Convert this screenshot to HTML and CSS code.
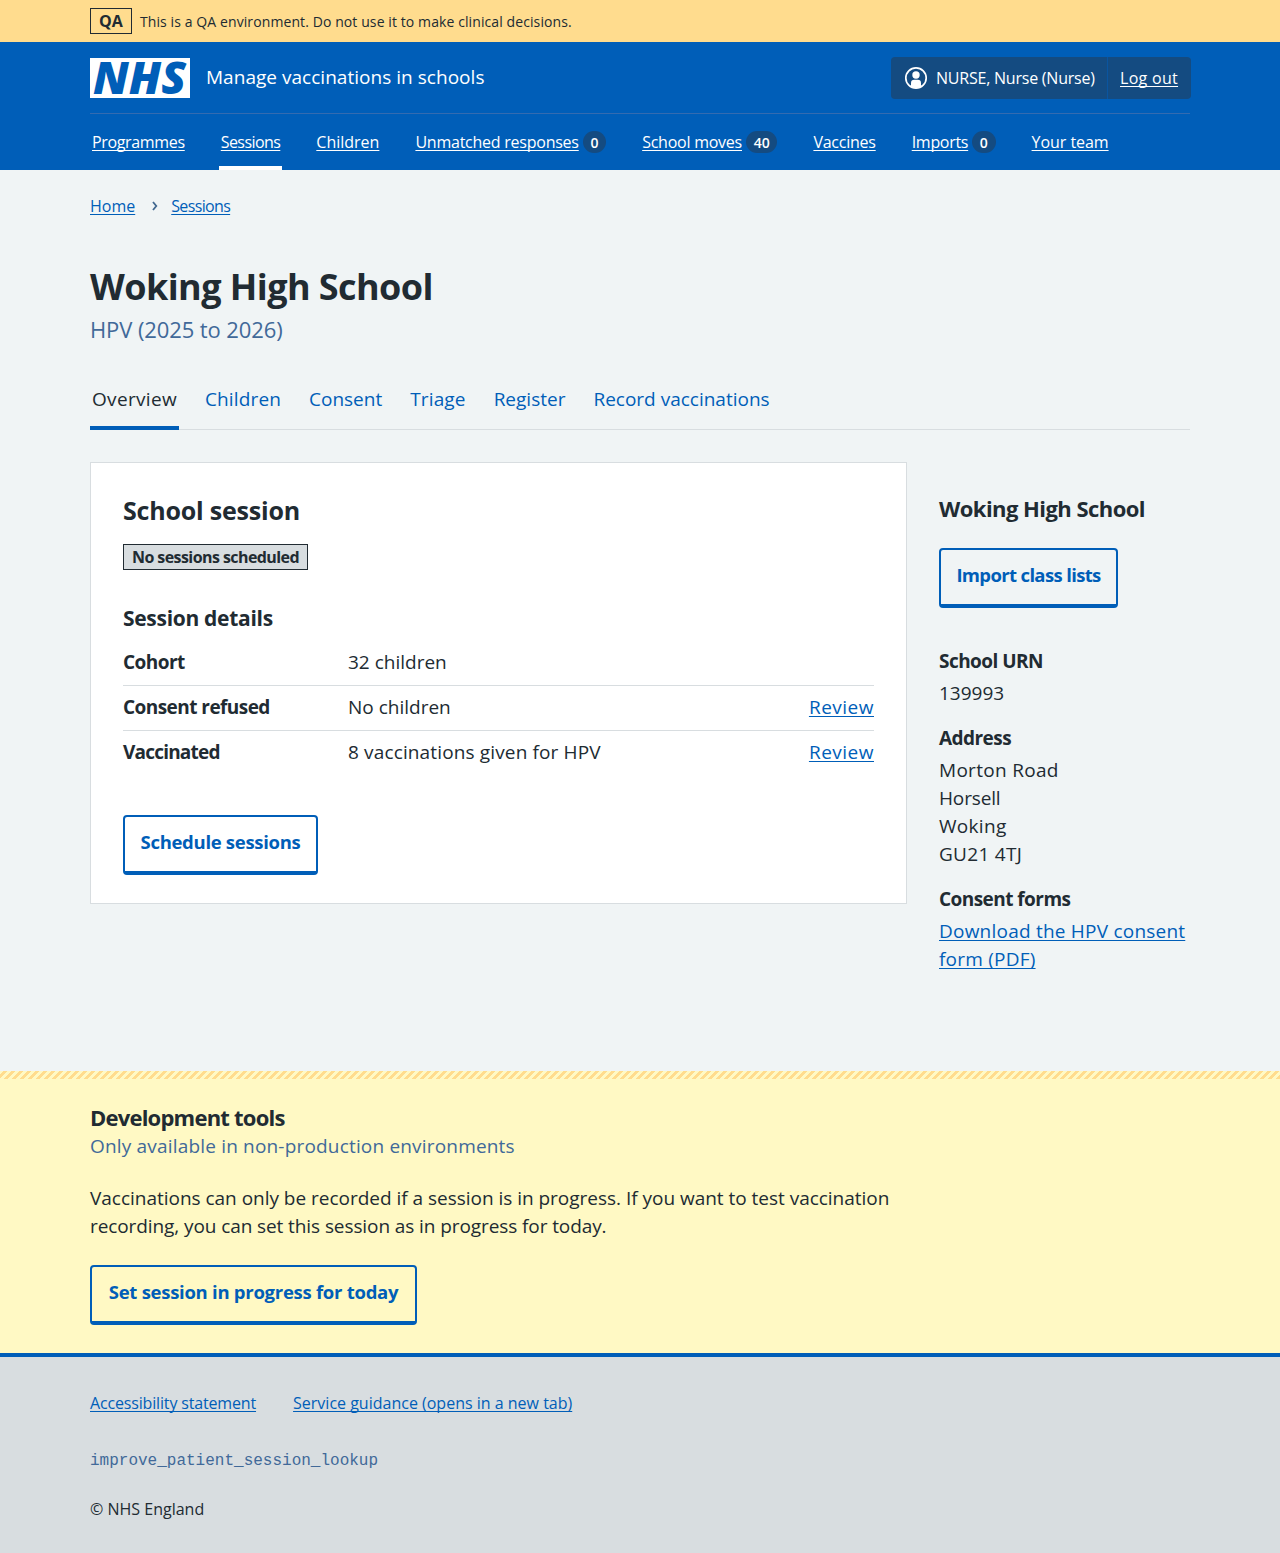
FILE: index.html
```html
<!DOCTYPE html>
<html lang="en">
<head>
<meta charset="utf-8">
<title>Woking High School – Manage vaccinations in schools</title>
<link rel="stylesheet" href="styles.css">
</head>
<body>
<div class="environment">
  <div class="container environment-row">
    <strong class="environment-tag">QA</strong>
    <span class="environment-text">This is a QA environment. Do not use it to make clinical decisions.</span>
  </div>
</div>
<header class="header">
  <div class="container">
    <div class="header-top">
      <svg class="logo" viewBox="0 0 100 40" width="100" height="40" role="img" aria-label="NHS">
        <rect width="100" height="40" fill="#fff"/>
        <text class="logo-text" x="3" y="36.4" textLength="93" lengthAdjust="spacingAndGlyphs">NHS</text>
      </svg>
      <span class="service">Manage vaccinations in schools</span>
      <div class="account">
        <span class="account-user">
          <svg class="account-icon" viewBox="0 0 24 24" width="24" height="24" aria-hidden="true">
            <circle cx="12" cy="12" r="10.2" fill="none" stroke="#fff" stroke-width="1.7"/>
            <circle cx="12" cy="9" r="3.7" fill="#fff"/>
            <path d="M7 20.500v-3.400a3.300 3.300 0 0 1 3.300-3.300h3.400a3.300 3.300 0 0 1 3.300 3.300v3.400q-5 3-10 0z" fill="#fff"/>
          </svg>
          <span class="account-name">NURSE, Nurse (Nurse)</span>
        </span>
        <a class="account-logout" href="#">Log out</a>
      </div>
    </div>
    <nav class="nav">
      <div class="nav-item nav-programmes"><a href="#">Programmes</a></div>
      <div class="nav-item nav-current"><a href="#">Sessions</a></div>
      <div class="nav-item nav-children"><a href="#">Children</a></div>
      <div class="nav-item"><a href="#">Unmatched responses</a><span class="count">0</span></div>
      <div class="nav-item"><a href="#">School moves</a><span class="count">40</span></div>
      <div class="nav-item"><a href="#">Vaccines</a></div>
      <div class="nav-item nav-imports"><a href="#">Imports</a><span class="count">0</span></div>
      <div class="nav-item nav-team"><a href="#">Your team</a></div>
    </nav>
  </div>
</header>
<div class="container page">
  <nav class="breadcrumb">
    <a href="#">Home</a>
    <svg class="chevron" viewBox="0 0 8 12" width="8" height="12" aria-hidden="true"><path d="M2 2l3.300 4L2 10" fill="none" stroke="#41678f" stroke-width="1.800"/></svg>
    <a class="crumb-sessions" href="#">Sessions</a>
  </nav>
  <main>
    <h1 class="title">Woking High School</h1>
    <p class="caption">HPV (2025 to 2026)</p>
    <nav class="tabs">
      <a class="tab tab-current" href="#">Overview</a>
      <a class="tab tab-wide" href="#">Children</a>
      <a class="tab" href="#">Consent</a>
      <a class="tab tab-wide" href="#">Triage</a>
      <a class="tab" href="#">Register</a>
      <a class="tab" href="#">Record vaccinations</a>
    </nav>
    <div class="columns">
      <section class="card">
        <h2 class="card-title">School session</h2>
        <strong class="status">No sessions scheduled</strong>
        <h3 class="card-subtitle">Session details</h3>
        <dl class="summary">
          <div class="summary-row"><dt>Cohort</dt><dd>32 children</dd></div>
          <div class="summary-row"><dt>Consent refused</dt><dd>No children</dd><dd class="action"><a href="#">Review</a></dd></div>
          <div class="summary-row"><dt class="tight">Vaccinated</dt><dd class="given">8 vaccinations given for HPV</dd><dd class="action"><a href="#">Review</a></dd></div>
        </dl>
        <button class="button">Schedule sessions</button>
      </section>
      <aside class="side">
        <h3 class="side-title">Woking High School</h3>
        <button class="button button-import">Import class lists</button>
        <dl class="details">
          <dt>School URN</dt><dd>139993</dd>
          <dt>Address</dt><dd class="address">Morton Road<br><span class="town">Horsell</span><br>Woking<br>GU21 4TJ</dd>
          <dt>Consent forms</dt><dd><a class="download" href="#">Download the HPV consent<br>form (PDF)</a></dd>
        </dl>
      </aside>
    </div>
  </main>
</div>
<section class="dev">
  <div class="container">
    <h2 class="dev-title">Development tools</h2>
    <p class="dev-caption">Only available in non-production environments</p>
    <p class="dev-text">Vaccinations can only be recorded if a session is in progress. If you want to test vaccination<br><span class="dev-line">recording, you can set this session as in progress for today.</span></p>
    <button class="button button-dev">Set session in progress for today</button>
  </div>
</section>
<footer class="footer">
  <div class="container">
    <div class="footer-links">
      <a class="accessibility" href="#">Accessibility statement</a>
      <a href="#">Service guidance (opens in a new tab)</a>
    </div>
    <p class="branch">improve_patient_session_lookup</p>
    <p class="copyright">© NHS England</p>
  </div>
</footer>
</body>
</html>
```
FILE: styles.css
```css
* { box-sizing: border-box; }
body {
  margin: 0;
  background: #f0f4f5;
  color: #212b32;
  font: 19px/28px "Open Sans", "Noto Sans", sans-serif;
}
h1, h2, h3, p, dl, dd { margin: 0; }
a { color: #005eb8; text-decoration-thickness: 1px; text-underline-offset: 2px; text-decoration-skip-ink: none; }
.container { width: 1100px; margin: 0 auto; white-space: nowrap; }

.environment { height: 42px; background: #ffdc8e; }
.environment-row { display: flex; gap: 8px; padding-top: 8px; }
.environment-tag { width: 42px; height: 26px; border: 1px solid #212b32; text-align: center; font-size: 16px; line-height: 24px; }
.environment-text { font-size: 14px; line-height: 27px; letter-spacing: 0.095px; }

.header { height: 128px; background: #005eb8; color: #fff; }
.header a { color: #fff; }
.header-top { display: flex; align-items: flex-start; height: 72px; padding-top: 15px; border-bottom: 1px solid #346bb0; }
.logo { margin: 1px 16px 0 0; overflow: visible; }
.logo-text { font: italic 800 45px "Open Sans", sans-serif; fill: #005eb8; }
.service { line-height: 40px; letter-spacing: 0.03px; }
.account { display: flex; margin: 0 -1px 0 auto; height: 42px; border-radius: 4px; background: #144b81; font-size: 16px; line-height: 42px; }
.account-user { display: flex; align-items: center; width: 217px; padding-left: 13px; gap: 8px; border-right: 1px solid #0a55a0; letter-spacing: -0.22px; }
.account-logout { width: 83px; padding-left: 12px; letter-spacing: 0.3px; }
.nav { display: flex; height: 56px; gap: 32px; font-size: 16px; line-height: 56px; letter-spacing: -0.24px; }
.nav-item { display: flex; align-items: center; padding: 0 2px; }
.nav-programmes { letter-spacing: -0.34px; }
.nav-current { border-bottom: 4px solid #fff; letter-spacing: -0.57px; }
.nav-current a { height: 56px; margin-bottom: -4px; }
.nav-children { letter-spacing: 0; }
.nav-imports { letter-spacing: -0.3px; }
.nav-team { letter-spacing: -0.05px; }
.count { height: 22px; margin-left: 4px; padding: 0 7.700px; border-radius: 11px; background: #144b81; font-size: 14px; font-weight: 600; line-height: 23px; letter-spacing: 0; }

.page { height: 901px; padding-top: 22px; }
.breadcrumb { display: flex; align-items: center; gap: 16px; height: 28px; font-size: 16px; }
.chevron { margin-right: -4px; }
.crumb-sessions { letter-spacing: -0.65px; }
.title { margin-top: 42px; font-size: 36px; line-height: 50px; letter-spacing: -0.57px; }
.caption { margin-top: 1px; color: #416999; font-size: 22px; line-height: 32px; letter-spacing: -0.1px; }
.tabs { display: flex; gap: 24px; height: 58px; margin-top: 27px; border-bottom: 1px solid #d8dde0; }
.tab { height: 58px; padding: 13px 2px 0; text-decoration: none; }
.tab-current { border-bottom: 4px solid #005eb8; color: #212b32; letter-spacing: 0.32px; }
.tab-wide { letter-spacing: 0.14px; }

.columns { display: flex; gap: 32px; margin-top: 32px; align-items: flex-start; }
.card { width: 817px; height: 442px; padding: 31px 32px; border: 1px solid #d8dde0; background: #fff; }
.card-title { font-size: 25px; line-height: 33px; letter-spacing: -0.2px; }
.status { display: block; width: 185px; height: 26px; margin-top: 17px; border: 1px solid #212b32; background: #d8dde0; text-align: center; font-size: 16px; line-height: 24px; letter-spacing: -0.57px; }
.card-subtitle { margin-top: 32px; font-size: 21px; line-height: 32px; letter-spacing: -0.3px; }
.summary { margin-top: 7px; }
.summary-row { display: grid; grid-template-columns: 225px 1fr auto; height: 45px; padding-top: 7px; border-bottom: 1px solid #d8dde0; }
.summary-row:last-child { border-bottom: 0; }
.given { letter-spacing: 0.14px; }
.action { letter-spacing: 0.5px; }
dt { font-weight: 700; letter-spacing: -0.55px; }
.tight { letter-spacing: -0.8px; }
.button { display: block; width: 195px; height: 60px; margin-top: 39px; padding: 0 0 5px; border: 2px solid #005eb8; border-bottom-width: 4px; border-radius: 4px; background: transparent; color: #005eb8; font: 700 18.500px/28px "Open Sans", sans-serif; letter-spacing: -0.3px; white-space: nowrap; }

.side { width: 251px; padding-top: 30px; }
.side-title { font-size: 22px; line-height: 32px; letter-spacing: -0.55px; }
.button-import { width: 179px; margin-top: 24px; letter-spacing: -0.65px; }
.details { margin-top: 39px; }
.details dd { margin: 4px 0 17px; }
.address { letter-spacing: 0.3px; }
.town { letter-spacing: -0.15px; }
.download { letter-spacing: 0.22px; }

.dev { height: 282px; padding-top: 31px; background: repeating-linear-gradient(-45deg, #ffdc8e 0 2.830px, #fff9c4 2.830px 5.657px) 0 0 / 100% 8px no-repeat #fff9c4; }
.dev-title { font-size: 22px; line-height: 30px; letter-spacing: -0.78px; }
.dev-caption { color: #416999; letter-spacing: 0.18px; }
.dev-text { margin-top: 24px; letter-spacing: -0.02px; }
.dev-line { letter-spacing: -0.09px; }
.button-dev { width: 327px; margin-top: 25px; letter-spacing: -0.27px; }

.footer { height: 200px; padding-top: 32px; border-top: 4px solid #005eb8; background: #d8dde0; font-size: 16px; }
.footer-links { display: flex; gap: 37px; }
.accessibility { letter-spacing: -0.16px; }
.branch { margin-top: 30px; color: #416999; font-family: "Liberation Mono", monospace; }
.copyright { margin-top: 20px; }
```
